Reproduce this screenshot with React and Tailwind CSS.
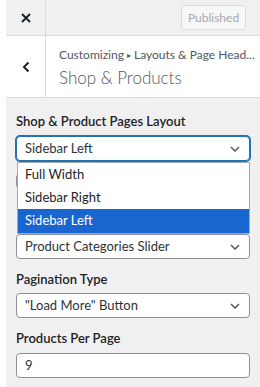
import React from 'react';

function Chevron() {
  return (
    <svg className="w-[10px] h-[6px] text-[#50575e] shrink-0" viewBox="0 0 10 6" fill="none" stroke="currentColor" strokeWidth={1.5}>
      <path d="M1 1l4 4 4-4" />
    </svg>
  );
}

function Select({ value, focused }) {
  return (
    <div
      className={`h-[25px] rounded-[4px] bg-white flex items-center justify-between pl-[8px] pr-[9px] text-[13px] text-[#2c3338] border ${
        focused ? 'border-[#2271b1] shadow-[0_0_0_1px_#2271b1]' : 'border-[#8c8f94]'
      }`}
    >
      <span className="whitespace-nowrap">{value}</span>
      <Chevron />
    </div>
  );
}

function Label({ children, className = '' }) {
  return <div className={`text-[13px] font-semibold text-[#1d2327] leading-[18px] ${className}`}>{children}</div>;
}

export default function App() {
  return (
    <div className="w-[260px] h-[387px] overflow-hidden bg-white flex" style={{ fontFamily: 'Lato, sans-serif' }}>
      <div className="w-[6px] bg-white shrink-0" />
      <div className="flex-1 min-w-0 flex flex-col bg-[#f0f0f1]">
        {/* top bar */}
        <div className="h-[36px] flex items-center border-b border-[#dcdcde] shrink-0">
          <div className="w-[40px] h-full flex items-center justify-center border-r border-[#dcdcde]">
            <svg className="w-[10px] h-[10px]" viewBox="0 0 10 10" stroke="#1d2327" strokeWidth={2}>
              <path d="M1 1l8 8M9 1l-8 8" />
            </svg>
          </div>
          <div className="flex-1 flex justify-end pr-[14px]">
            <button className="h-[25px] w-[65px] rounded-[3px] border border-[#dcdcde] bg-[#f6f7f7] text-[#a7aaad] text-[12px]">
              Published
            </button>
          </div>
        </div>
        {/* section header */}
        <div className="h-[62px] flex bg-white border-b border-[#dcdcde] shrink-0">
          <div className="w-[40px] flex items-center justify-center border-r border-[#dcdcde]">
            <svg className="w-[8px] h-[12px]" viewBox="0 0 8 12" fill="none" stroke="#1d2327" strokeWidth={2}>
              <path d="M6.5 1.5L2 6l4.5 4.5" />
            </svg>
          </div>
          <div className="flex-1 min-w-0 pl-[13px] pt-[11px] overflow-hidden">
            <div className="text-[12px] text-[#50575e] whitespace-nowrap leading-[16px]">
              Customizing <span className="text-[8px] relative top-[-1px]">▸</span> Layouts &amp; Page Head...
            </div>
            <div className="mt-[2px] text-[17px] font-light text-[#50575e] leading-[24px]">Shop &amp; Products</div>
          </div>
        </div>
        {/* controls */}
        <div className="flex-1 pl-[10px] pr-[10px] pt-[14px]">
          <Label>Shop &amp; Product Pages Layout</Label>
          <div className="relative mt-[6px]">
            <Select value="Sidebar Left" focused />
            <div className="absolute left-[1px] right-[0px] top-[26px] bg-white border border-[#a7aaad] z-10 text-[13px] text-[#1d2327]">
              <div className="h-[23px] flex items-center pl-[7px]">Full Width</div>
              <div className="h-[23px] flex items-center pl-[7px]">Sidebar Right</div>
              <div className="h-[24px] flex items-center pl-[7px] bg-[#1a66d1] text-white">Sidebar Left</div>
            </div>
            <div className="h-[73px] pt-[14px]">
              <div className="w-[2px] h-[12px] rounded-l-[2px] bg-[#8c8f94]" />
            </div>
          </div>
          <Select value="Product Categories Slider" />
          <Label className="mt-[11px]">Pagination Type</Label>
          <div className="mt-[5px]">
            <Select value={'"Load More" Button'} />
          </div>
          <Label className="mt-[11px]">Products Per Page</Label>
          <div className="mt-[6px] h-[25px] rounded-[4px] border border-[#8c8f94] bg-white flex items-center pl-[8px] text-[13px] text-[#2c3338]">
            9
          </div>
        </div>
      </div>
    </div>
  );
}
